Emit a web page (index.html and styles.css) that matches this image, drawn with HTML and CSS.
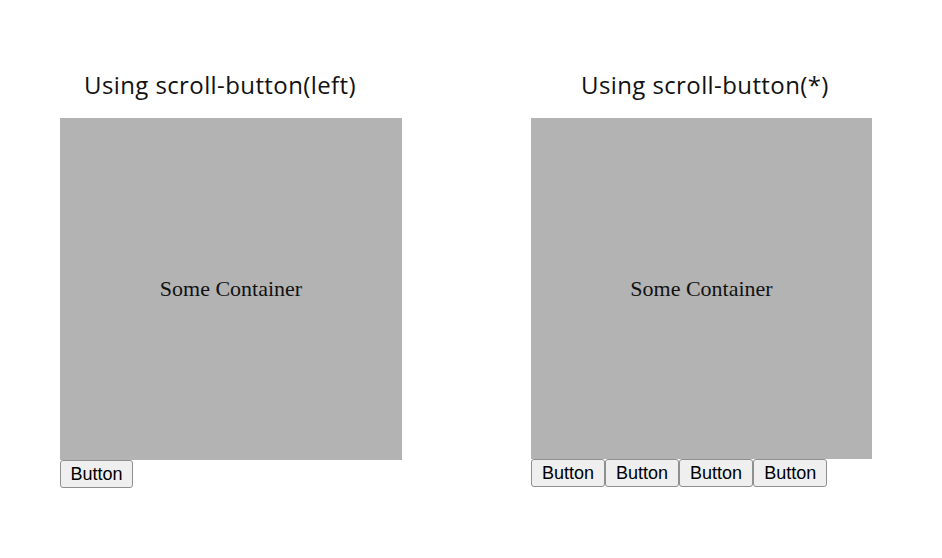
FILE: index.html
```html
<!DOCTYPE html>
<html lang="en">
<head>
<meta charset="utf-8">
<title>scroll-button demo</title>
<link rel="stylesheet" href="styles.css">
</head>
<body>
  <main class="demo">
    <section class="panel panel-left">
      <h2 class="panel-title">Using scroll-button(left)</h2>
      <div class="box">Some Container</div>
      <div class="buttons">
        <button class="btn">Button</button>
      </div>
    </section>
    <section class="panel panel-right">
      <h2 class="panel-title">Using scroll-button(*)</h2>
      <div class="box">Some Container</div>
      <div class="buttons">
        <button class="btn">Button</button>
        <button class="btn">Button</button>
        <button class="btn">Button</button>
        <button class="btn">Button</button>
      </div>
    </section>
  </main>
</body>
</html>
```

FILE: styles.css
```css
html, body {
  margin: 0;
  background: #ffffff;
}

.demo {
  display: flex;
  align-items: flex-start;
  padding: 70px 0 0 60px;
}

.panel {
  display: flex;
  flex-direction: column;
}

.panel-left {
  width: 342px;
}

.panel-right {
  width: 341px;
  margin-left: 129px;
}

.panel-title {
  margin: 0 0 18px;
  height: 30px;
  line-height: 30px;
  font-family: "Open Sans", sans-serif;
  font-weight: 400;
  font-size: 24px;
  letter-spacing: 0.4px;
  color: #111111;
  white-space: nowrap;
}

.panel-left .panel-title {
  padding-left: 24px;
}

.panel-right .panel-title {
  padding-left: 50px;
}

.box {
  display: flex;
  align-items: center;
  justify-content: center;
  background: #b3b3b3;
  font-family: "Liberation Serif", serif;
  font-size: 22px;
  color: #111111;
}

.panel-left .box {
  height: 342px;
}

.panel-right .box {
  height: 341px;
}

.buttons {
  display: flex;
}

.btn {
  box-sizing: border-box;
  height: 28px;
  padding: 0 10px;
  font-family: "Liberation Sans", sans-serif;
  font-size: 18px;
  color: #000000;
  background: #efefef;
  border: 1px solid #8f8f8f;
  border-radius: 3px;
}

.panel-left .btn {
  padding: 0 9.5px;
}
```
